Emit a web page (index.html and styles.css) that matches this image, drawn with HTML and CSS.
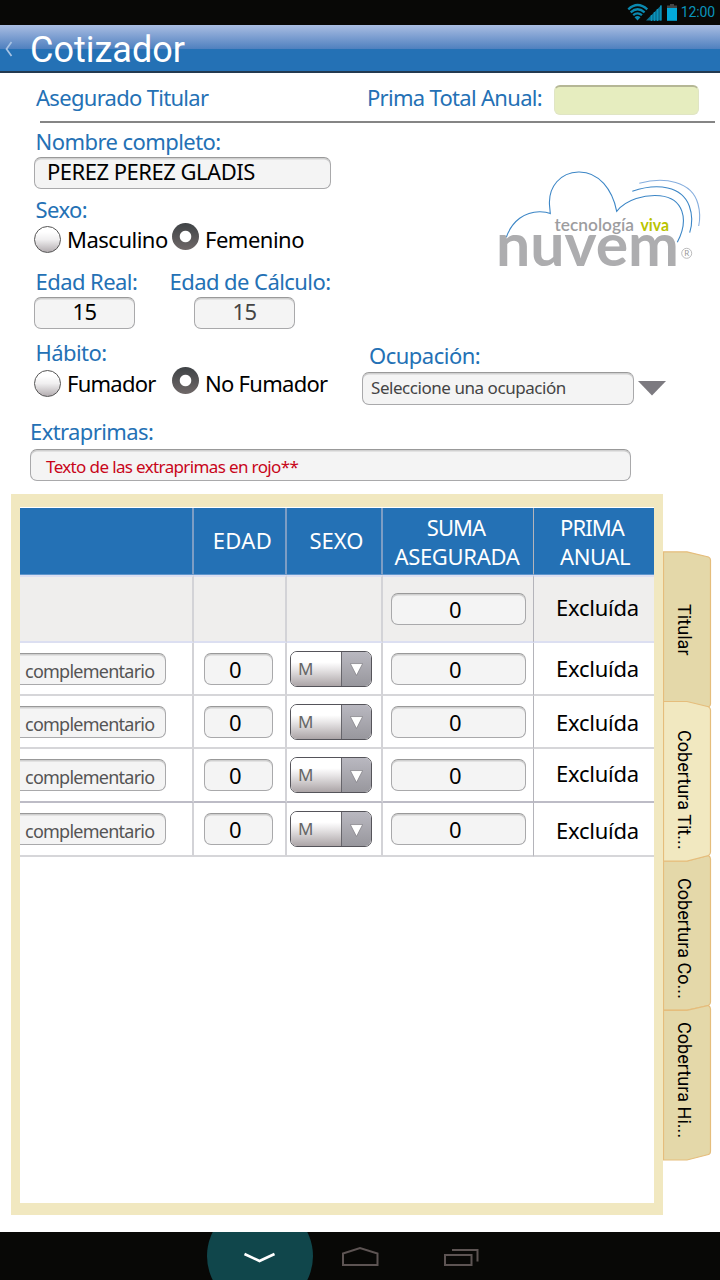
FILE: index.html
```html
<!DOCTYPE html>
<html lang="es">
<head>
<meta charset="utf-8">
<title>Cotizador</title>
<link rel="stylesheet" href="styles.css">
</head>
<body>
<div class="screen">
  <div class="status">
    <svg class="status-icons" width="56" height="20" viewBox="0 0 56 20">
      <g fill="none" stroke="#0a89b0" stroke-width="2.3">
        <path d="M1.300 7.300Q10.500 -1.300 20.300 7.300"/>
        <path d="M3.700 10.300Q10.500 4.200 17.600 10.300"/>
        <path d="M6.200 13.200Q10.500 9.600 15 13.200"/>
      </g>
      <path d="M7.500 15.200Q10.500 12.800 13.500 15.200L10.500 18.500Z" fill="#0a89b0"/>
      <path d="M19 18.500L34.500 3V18.500Z" fill="#0a6f90"/>
      <path d="M24.500 13v6M27.500 10v9M30.500 7v12M33.800 3.500v15" stroke="#0a93bb" stroke-width="1.500"/>
      <path d="M43 2h4v1.500h3V7H40V3.500h3z" fill="#444"/>
      <path d="M40 6h10v12.800H40z" fill="#03a9d9"/>
    </svg>
    <span class="clock">12:00</span>
  </div>
  <header class="bar">
    <svg class="back" width="9" height="16" viewBox="0 0 9 16"><path d="M7.500 1L2.500 8l5 7" fill="none" stroke="#a9c4e4" stroke-width="1.700"/></svg>
    <h1 class="title">Cotizador</h1>
  </header>

  <section class="summary">
    <span class="label holder">Asegurado Titular</span>
    <span class="label total-label">Prima Total Anual:</span>
    <span class="total"></span>
  </section>

  <section class="form">
    <div class="person">
      <label class="label">Nombre completo:</label>
      <div class="field name">PEREZ PEREZ GLADIS</div>
      <label class="label sex-label">Sexo:</label>
      <div class="radios sex">
        <span class="radio"></span><span class="option first masc">Masculino</span>
        <span class="radio on"></span><span class="option">Femenino</span>
      </div>
      <div class="ages">
        <div class="age"><label class="label">Edad Real:</label><div class="field num">15</div></div>
        <div class="age calc"><label class="label">Edad de Cálculo:</label><div class="field num muted">15</div></div>
      </div>
      <label class="label habit-label">Hábito:</label>
      <div class="radios">
        <span class="radio"></span><span class="option first">Fumador</span>
        <span class="radio on"></span><span class="option nofum">No Fumador</span>
      </div>
    </div>
    <div class="side">
      <svg class="logo" width="220" height="124" viewBox="10 10 220 124">
        <g fill="none" stroke="#3c86c6" stroke-width="1.100">
          <path d="M26.300 87.300C32 71 45 61.500 60 61.700Q66.500 61.800 70.300 63.500L69.500 55C68.300 36.500 80.500 22.500 98.500 22C119 21.500 132.500 40 136.700 61.300C146 49.500 165 44.300 180 45.700C203 48 209.500 69 197.300 92.300"/>
          <path d="M152.300 41.300C178 32.500 202 36.500 209.300 56Q214 69 209.700 82.700"/>
          <path d="M159.300 33.300C184 26.500 212 31 218 54Q221 65 218.700 76" stroke="#86aede"/>
        </g>
        <text class="tag" x="74.500" y="81" textLength="79.500" lengthAdjust="spacingAndGlyphs">tecnología</text>
        <text class="tag viva" x="160.500" y="81" textLength="28.500" lengthAdjust="spacingAndGlyphs">viva</text>
        <text class="brand" x="16" y="115.700" textLength="183" lengthAdjust="spacingAndGlyphs">nuvem</text>
        <circle cx="206.700" cy="103.300" r="5" fill="none" stroke="#a9a9ab" stroke-width=".8"/>
        <text class="reg" x="206.700" y="106.300">R</text>
      </svg>
      <label class="label job-label">Ocupación:</label>
      <div class="job">
        <div class="field select">Seleccione una ocupación</div>
        <svg width="28" height="15" viewBox="0 0 28 15"><path d="M0 0H28L14 14.500Z" fill="#7c7a80"/></svg>
      </div>
    </div>
  </section>

  <section class="extra">
    <label class="label">Extraprimas:</label>
    <div class="field red">Texto de las extraprimas en rojo**</div>
  </section>

  <section class="coverage">
    <div class="panel">
      <div class="grid">
        <div class="cell head"></div>
        <div class="cell head edad">EDAD</div>
        <div class="cell head">SEXO</div>
        <div class="cell head two"><span class="suma">SUMA</span><span>ASEGURADA</span></div>
        <div class="cell head two prima"><span class="suma">PRIMA</span><span>ANUAL</span></div>

        <div class="cell base"></div><div class="cell base"></div><div class="cell base"></div>
        <div class="cell base"><div class="field amount">0</div></div>
        <div class="cell base prima up">Excluída</div>

        <div class="cell"><div class="field kind">complementario</div></div>
        <div class="cell"><div class="field years">0</div></div>
        <div class="cell"><div class="pick"><span class="pick-value">M</span><span class="pick-arrow"><svg width="13" height="13" viewBox="0 0 12 12"><path d="M.3.500h11.400L6 11.500z" fill="#fff" stroke="#77757c" stroke-width=".6"/></svg></span></div></div>
        <div class="cell"><div class="field amount">0</div></div>
        <div class="cell prima">Excluída</div>

        <div class="cell"><div class="field kind">complementario</div></div>
        <div class="cell"><div class="field years">0</div></div>
        <div class="cell"><div class="pick"><span class="pick-value">M</span><span class="pick-arrow"><svg width="13" height="13" viewBox="0 0 12 12"><path d="M.3.500h11.400L6 11.500z" fill="#fff" stroke="#77757c" stroke-width=".6"/></svg></span></div></div>
        <div class="cell"><div class="field amount">0</div></div>
        <div class="cell prima down">Excluída</div>

        <div class="cell thick"><div class="field kind">complementario</div></div>
        <div class="cell thick"><div class="field years">0</div></div>
        <div class="cell thick"><div class="pick"><span class="pick-value">M</span><span class="pick-arrow"><svg width="13" height="13" viewBox="0 0 12 12"><path d="M.3.500h11.400L6 11.500z" fill="#fff" stroke="#77757c" stroke-width=".6"/></svg></span></div></div>
        <div class="cell thick"><div class="field amount">0</div></div>
        <div class="cell thick prima up">Excluída</div>

        <div class="cell"><div class="field kind">complementario</div></div>
        <div class="cell"><div class="field years">0</div></div>
        <div class="cell"><div class="pick"><span class="pick-value">M</span><span class="pick-arrow"><svg width="13" height="13" viewBox="0 0 12 12"><path d="M.3.500h11.400L6 11.500z" fill="#fff" stroke="#77757c" stroke-width=".6"/></svg></span></div></div>
        <div class="cell"><div class="field amount">0</div></div>
        <div class="cell prima down">Excluída</div>
      </div>
    </div>
    <nav class="tabs">
      <svg class="tabs-shape" width="49" height="611" viewBox="0 0 49 611">
        <g stroke="#e5bd7c" stroke-width="1.200">
          <path d="M.5.800H24L45.500 6Q47.500 7 47.500 9V153Q47.500 155 45.500 156L24 161H.5z" fill="#e4d8a9"/>
          <path d="M.5 310H24L45.500 304.500Q47.500 306 47.500 308V451Q47.500 453.500 45.500 454.500L24 459H.5z" fill="#e4d8a9"/>
          <path d="M.5 459.300H24L45.500 454.500Q47.500 456 47.500 458V600Q47.500 603 45.500 603.500L24 609H.5z" fill="#e4d8a9"/>
          <path d="M.5 150.500H24L45.500 155.700Q47.500 157 47.500 159V301Q47.500 303.500 45.500 304.500L24 310.200H.5z" fill="#f1e8c0"/>
        </g>
      </svg>
      <span class="tab">Titular</span>
      <span class="tab">Cobertura Tit...</span>
      <span class="tab">Cobertura Co...</span>
      <span class="tab">Cobertura Hi...</span>
    </nav>
  </section>

  <footer class="softkeys">
    <svg width="720" height="48" viewBox="0 0 720 48">
      <circle cx="260" cy="24" r="53" fill="#10464b"/>
      <path d="M244.500 22L259.500 29L274.500 22" fill="none" stroke="#fff" stroke-width="2.600"/>
      <g fill="none" stroke="#5d5453" stroke-width="2">
        <path d="M343 33V21.500L360 16L377.500 21.500V33Z"/>
        <path d="M445 23H471.500V33H445Z"/>
        <path d="M452 18H477.500V29.500"/>
      </g>
    </svg>
  </footer>
</div>
</body>
</html>
```
FILE: styles.css
```css
* { box-sizing: border-box; }
body { margin: 0; background: #fff; }
.screen {
  width: 720px; height: 1280px; overflow: hidden;
  display: flex; flex-direction: column;
  font-family: "Noto Sans", sans-serif; font-size: 22px; letter-spacing: -0.5px;
  line-height: 26px; color: #000;
}
svg { display: block; flex: none; }

.status { height: 25px; flex: none; background: #080806; display: flex; justify-content: flex-end; padding-right: 5px; }
.status-icons { margin: 2px -2px 0 0; }
.clock { font: 14px/24px Roboto, sans-serif; letter-spacing: -0.1px; color: #0a93bb; }

.bar {
  height: 48px; flex: none; display: flex; align-items: center; padding-left: 4px;
  border-bottom: 2px solid #233a50;
  background: linear-gradient(#a9bde2, #4f80bf 24px, #2471b5 24px);
}
.back { margin-right: 17px; margin-top: 2px; }
.title { margin: 3px 0 0; font: 36px/44px Roboto, sans-serif; letter-spacing: 0; color: #fff; }

.label { color: #2471b5; white-space: nowrap; display: block; }
.summary {
  height: 50px; flex: none; margin: 0 5px 0 40px; border-bottom: 2px solid #858585;
  display: flex; align-items: center;
}
.holder { width: 331px; margin-left: -4px; letter-spacing: -0.7px; }
.total-label { letter-spacing: -0.7px; }
.total { margin: 5px 16px 0 auto; width: 145px; height: 30px; border-radius: 6px; background: #e6edbf; border: 1px solid #e0e5c4; border-top: 2px solid #b5b795; }

.field {
  height: 32px; border: 1.500px solid #a9a9ab; border-top-color: #999; border-radius: 7px;
  background: #f4f4f4; box-shadow: inset 0 1.500px 0 #d0d0d0;
  line-height: 29px; white-space: nowrap;
}
.form { flex: none; height: 289px; display: flex; padding: 5px 0 0 34px; }
.person { width: 328px; display: flex; flex-direction: column; }
.person .label { margin-left: 1.500px; letter-spacing: -0.56px; }
.name { width: 297px; margin-top: 3px; padding-left: 12px; line-height: 27px; }
.sex-label { margin-top: 7px; }
.radios { height: 36px; display: flex; align-items: center; }
.sex { margin: -1px 0 1px; }
.radio {
  flex: none; width: 27px; height: 27px; border-radius: 50%;
  border: 1.500px solid #555; background: linear-gradient(#fff 20%, #f0eff0 50%, #b3adb0);
}
.radio.on { border: 0; margin-bottom: 5px; background: radial-gradient(circle at 50% 50%, #fff 5.300px, transparent 6.200px), linear-gradient(#3f4346, #6f6868); }
.option { margin-left: 6px; }
.option.first { width: 105px; letter-spacing: -0.75px; }
.option.masc { letter-spacing: -0.5px; }
.option.nofum { letter-spacing: -0.72px; }
.ages { display: flex; margin-top: 10px; }
.age { width: 134px; }
.age.calc .field { margin-left: 26px; }
.num { width: 101px; text-align: center; margin-top: 3px; line-height: 27px; }
.muted { color: #444; }
.habit-label { margin-top: 10px; }

.side { display: flex; flex-direction: column; }
.logo { margin: 32px 0 0 128px; }
.tag { font: 600 17px Lato, sans-serif; letter-spacing: 0; fill: #9d9d9f; }
.viva { font-weight: 700; fill: #b9c400; }
.brand { font: 700 59px Lato, sans-serif; letter-spacing: 0; fill: #adadaf; }
.reg { font: 8px Lato, sans-serif; letter-spacing: 0; fill: #999; text-anchor: middle; }
.job-label { margin: 58px 0 0 7px; }
.job { display: flex; align-items: center; gap: 4px; margin-top: 4px; }
.select { width: 272px; height: 33px; font-size: 17px; letter-spacing: -0.45px; color: #444; padding-left: 8px; }

.extra { flex: none; height: 82px; padding: 6px 0 0 30px; }
.extra .label { letter-spacing: -0.6px; }
.red { width: 601px; margin-top: 5px; padding-left: 15px; font-size: 17px; letter-spacing: -0.63px; line-height: 33px; color: #c8061a; }

.coverage { flex: none; display: flex; padding-left: 11px; }
.panel { width: 652px; height: 721px; border: solid #f1e8c0; border-width: 13px 9px 12px; padding-top: 1px; background: #fff; }
.grid {
  width: 634px; display: grid; grid-template-columns: 174px 93px 96px 151px 1fr;
  grid-template-rows: 67px 68px 53px 53px 54px 54px;
  overflow: hidden;
}
.cell { display: flex; align-items: center; justify-content: center; border-right: 2px solid #d3d3d7; border-bottom: 2px solid #d6d6d9; min-width: 0; }
.cell:nth-child(5n+1) { justify-content: flex-start; }
.cell:nth-child(5n+4) { border-right: 1px solid #b4b4ba; }
.cell:nth-child(5n) { border-right: 0; }
.head { background: #2471b5; color: #fff; flex-direction: column; line-height: 29px; border-bottom: 1px solid #5f95cc; border-right-color: #7d9dc4; letter-spacing: -0.3px; padding-bottom: 2px; }
.head.two { padding: 2px 2px 0 0; }
.head.edad { letter-spacing: 0.4px; padding-left: 6px; }
.head.cell:nth-child(3) { padding-left: 5px; letter-spacing: 0; }
.suma { margin-right: 2px; letter-spacing: -0.9px; }
.base { background: #efeeed; border-top: 2px solid #dcdff1; border-bottom-color: #dcdff1; }
.thick { border-bottom-color: #bdbcc6; }
.cell.prima { justify-content: flex-start; padding-left: 22px; letter-spacing: -0.25px; padding-bottom: 1px; }
.head.cell.prima { justify-content: center; align-items: flex-start; padding: 2px 0 0 26px; letter-spacing: -0.4px; }
.cell.prima.up { padding-bottom: 4px; }
.cell.prima.down { padding: 1px 0 0 22px; }
.amount { width: 135px; text-align: center; padding-right: 6px; line-height: 31px; }
.years { width: 69px; text-align: center; padding-right: 7px; margin-right: 2px; line-height: 31px; }
.kind { width: 146px; border-left: 0; border-radius: 0 7px 7px 0; padding-left: 5px; font-size: 18px; letter-spacing: -0.75px; color: #555; line-height: 35px; }
.pick { display: flex; width: 82px; height: 36px; border: 1.500px solid #55545a; border-radius: 7px; overflow: hidden; margin-right: 6px; }
.pick-value { width: 51px; border-right: 1px solid #66656b; padding-left: 7px; font-size: 17px; line-height: 34px; color: #666; background: linear-gradient(#fff 30%, #e9e7e8 50%, #aba4a6); }
.pick-arrow { flex: 1; display: flex; align-items: center; justify-content: center; padding-top: 2px; background: linear-gradient(#b9b8c0, #98979d); }

.tabs { position: relative; width: 49px; height: 611px; margin-top: 57px; display: grid; grid-template-rows: 126px 148px 144px 1fr; padding-top: 53px; }
.tabs-shape { position: absolute; left: 0; top: 0; }
.tab { position: relative; writing-mode: vertical-rl; font: 18px/42px Roboto, sans-serif; letter-spacing: 0.05px; width: 42px; white-space: nowrap; }

.softkeys { flex: none; margin-top: auto; height: 48px; background: #080806; }
```
